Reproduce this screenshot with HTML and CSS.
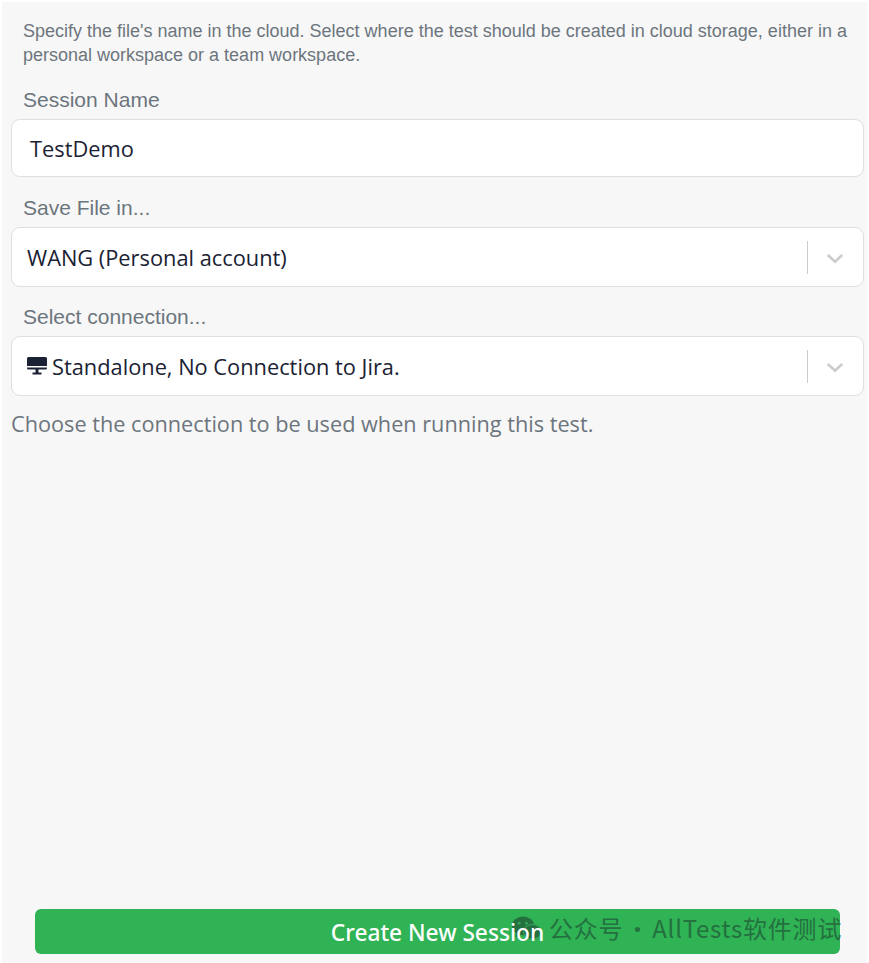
FILE: index.html
```html
<!DOCTYPE html>
<html lang="en">
<head>
    <meta charset="UTF-8">
    <meta name="viewport" content="width=device-width, initial-scale=1.0">
    <title>Create New Session</title>
    <link rel="stylesheet" href="styles.css">
</head>
<body>
    <div class="panel">
        <p class="intro">Specify the file's name in the cloud. Select where the test should be created in cloud storage, either in a personal workspace or a team workspace.</p>

        <label class="field-label label-session">Session Name</label>
        <div class="control control-input">TestDemo</div>

        <label class="field-label label-save">Save File in...</label>
        <div class="control control-select">
            <span class="value">WANG (Personal account)</span>
            <span class="divider"></span>
            <svg class="chevron" viewBox="0 0 20 12"><path d="M2 2l8 7.5L18 2" fill="none" stroke="#cccccc" stroke-width="3"/></svg>
        </div>

        <label class="field-label label-connection">Select connection...</label>
        <div class="control control-select">
            <span class="value">
                <svg class="desktop" viewBox="0 0 20 18"><path d="M1.5 0h17A1.5 1.5 0 0 1 20 1.500V9H0V1.500A1.500 1.500 0 0 1 1.500 0zM0 10.500h20V11a1.500 1.500 0 0 1-1.500 1.500h-17A1.500 1.500 0 0 1 0 11zM8.500 12.500h3V15.500h3V17.500h-9V15.500h3z" fill="#1a2233"/></svg>
                Standalone, No Connection to Jira.
            </span>
            <span class="divider"></span>
            <svg class="chevron" viewBox="0 0 20 12"><path d="M2 2l8 7.500L18 2" fill="none" stroke="#cccccc" stroke-width="3"/></svg>
        </div>
        <p class="hint">Choose the connection to be used when running this test.</p>

        <div class="actions">
            <button class="create-btn" type="button"><span class="create-label">Create New Session</span></button>
        </div>
    </div>

    <!-- Watermark over the button -->
    <div class="watermark">
        <svg class="wechat" viewBox="0 0 36 28">
            <ellipse cx="14" cy="11.500" rx="13" ry="11" fill="#24703f"/>
            <path d="M6 19l-1 6 7-4z" fill="#24703f"/>
            <ellipse cx="25" cy="18.500" rx="10.500" ry="8.500" fill="#24703f" stroke="#33a457" stroke-width="1.200"/>
            <circle cx="9.500" cy="8.500" r="1.700" fill="#33a457"/>
            <circle cx="18" cy="8.500" r="1.700" fill="#33a457"/>
        </svg>
        <span>公众号 · AllTests软件测试</span>
    </div>
</body>
</html>
```

FILE: styles.css
```css
/* General Styles */
html, body {
    height: 100%;
}

body {
    margin: 0;
    background: #ffffff;
    font-family: "Liberation Sans", Arial, sans-serif;
    color: #6c757d;
    overflow: hidden;
}

.panel {
    box-sizing: border-box;
    display: flex;
    flex-direction: column;
    width: 865px;
    height: 961px;
    margin: 2px 0 0 2px;
    padding: 17px 3px 9px 9px;
    background: #f7f7f7;
}

.intro {
    margin: 0 12px;
    font-size: 18px;
    line-height: 24px;
}

.field-label {
    display: block;
    margin-left: 12px;
    font-size: 21px;
    line-height: 26px;
    color: #6c757d;
}

.label-session {
    margin-top: 20px;
    margin-bottom: 6px;
}

.label-save {
    margin-top: 18px;
    margin-bottom: 6px;
}

.label-connection {
    margin-top: 17px;
    margin-bottom: 6px;
}

/* Inputs and selects */
.control {
    box-sizing: border-box;
    display: flex;
    align-items: center;
    background: #ffffff;
    border: 1.5px solid #dcdfe4;
    border-radius: 9px;
    font-family: "Open Sans", "Noto Sans", sans-serif;
    font-size: 21.800px;
    color: #1a2233;
}

.control-input {
    height: 58px;
    padding-left: 18px;
}

.control-select {
    height: 60px;
    padding-left: 15px;
}

.value {
    flex: 1;
    display: flex;
    align-items: center;
    gap: 5px;
    white-space: nowrap;
}

.desktop {
    width: 20px;
    height: 18px;
}

.divider {
    width: 1.500px;
    height: 33px;
    background: #cccccc;
}

.chevron {
    width: 18px;
    height: 11px;
    margin: 2px 19px 0 18px;
}

.hint {
    margin: 13px 0 0 0;
    font-family: "Open Sans", "Noto Sans", sans-serif;
    font-size: 21.700px;
    line-height: 30px;
    color: #6c757d;
}

.actions {
    margin-top: auto;
    padding: 0 24px;
}

.create-btn {
    display: block;
    width: 100%;
    height: 45px;
    padding: 2px 0 0 0;
    background: #2fb355;
    color: #ffffff;
    border: none;
    border-radius: 6px;
    font-family: "Noto Sans", "Open Sans", sans-serif;
    font-size: 22.700px;
    font-weight: 500;
}

/* The label stays readable through the watermark */
.create-label {
    position: relative;
    z-index: 1;
}

/* Watermark */
.watermark {
    position: absolute;
    left: 510px;
    top: 912px;
    display: flex;
    align-items: center;
    gap: 6px;
    font-family: "Noto Sans CJK SC", sans-serif;
    font-size: 24px;
    line-height: 32px;
    letter-spacing: 0.750px;
    word-spacing: -4px;
    color: #24703f;
    white-space: nowrap;
}

.wechat {
    width: 33px;
    height: 24px;
}
```
